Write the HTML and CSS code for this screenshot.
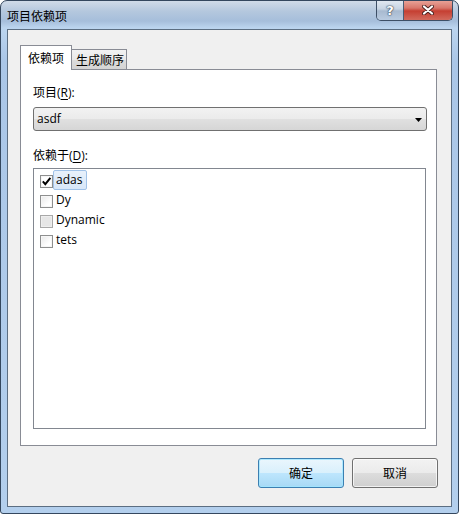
FILE: index.html
```html
<!DOCTYPE html>
<html lang="zh-CN">
<head>
<meta charset="utf-8">
<title>项目依赖项</title>
<link rel="stylesheet" href="styles.css">
</head>
<body>
<div class="window">
  <div class="titlebar">
    <span class="title">项目依赖项</span>
    <div class="caption">
      <div class="cap help">?</div>
      <div class="cap close">
        <svg width="12" height="10" viewBox="0 0 12 10">
          <path d="M2 1.5 L10 8.5 M10 1.5 L2 8.5" stroke="#4a2220" stroke-width="4" stroke-linecap="round" fill="none"/>
          <path d="M2 1.5 L10 8.5 M10 1.5 L2 8.5" stroke="#ffffff" stroke-width="2.2" stroke-linecap="round" fill="none"/>
        </svg>
      </div>
    </div>
  </div>
  <div class="client">
    <div class="tabs">
      <div class="tab active">依赖项</div>
      <div class="tab inactive">生成顺序</div>
    </div>
    <div class="panel">
      <div class="label">项目(<u>R</u>):</div>
      <div class="combo">
        <span class="combo-text">asdf</span>
        <svg class="arrow" width="7" height="4" viewBox="0 0 7 4"><polygon points="0,0 7,0 3.5,4" fill="#000"/></svg>
      </div>
      <div class="label label2">依赖于(<u>D</u>):</div>
      <div class="list">
        <div class="item">
          <span class="cb checked">
            <svg width="11" height="11" viewBox="0 0 11 11"><path d="M1.8 5.4 L4.3 8.2 L9.4 1.8" stroke="#000" stroke-width="2" fill="none"/></svg>
          </span>
          <span class="txt focus">adas</span>
        </div>
        <div class="item">
          <span class="cb"></span>
          <span class="txt">Dy</span>
        </div>
        <div class="item">
          <span class="cb disabled"></span>
          <span class="txt">Dynamic</span>
        </div>
        <div class="item">
          <span class="cb"></span>
          <span class="txt">tets</span>
        </div>
      </div>
    </div>
    <div class="buttons">
      <div class="btn default">确定</div>
      <div class="btn">取消</div>
    </div>
  </div>
</div>
</body>
</html>
```
FILE: styles.css
```css
* { box-sizing: border-box; }

body {
  margin: 0;
  background: #ffffff;
  font-family: "Open Sans", "Noto Sans CJK SC", sans-serif;
  font-size: 12px;
  color: #000;
}

.window {
  width: 459px;
  height: 514px;
  border: 1px solid #34475e;
  border-radius: 7px 7px 3px 3px;
  background: linear-gradient(to bottom, #d0dbe8 0px, #b5c8de 10px, #a6bedb 20px, #bcd5ef 27px, #aac6e7 60px, #b3cfed 100%);
  display: flex;
  flex-direction: column;
  overflow: hidden;
}

.titlebar {
  height: 28px;
  display: flex;
  align-items: flex-start;
  padding-left: 6px;
  flex: none;
}

.title {
  margin-top: 7px;
  line-height: 15px;
  font-family: "Noto Sans CJK SC", sans-serif;
}

.caption {
  margin-left: auto;
  margin-right: 5px;
  margin-top: -1px;
  height: 21px;
  display: flex;
  border: 1px solid #3d4f66;
  border-top: 0;
  border-radius: 0 0 5px 5px;
  overflow: hidden;
}

.cap {
  height: 20px;
  display: flex;
  align-items: center;
  justify-content: center;
}

.help {
  width: 27px;
  border-right: 1px solid #4a5c74;
  background: linear-gradient(to bottom, #e3eaf2 0%, #c7d4e3 45%, #a8bad0 55%, #b9cbe0 100%);
  color: #ffffff;
  font-family: "DejaVu Sans", sans-serif;
  font-weight: bold;
  font-size: 13px;
  text-shadow: 0 0 1px #3c4a5c, 0 0 1px #3c4a5c, 0 0 2px #3c4a5c;
}

.close {
  width: 48px;
  background: linear-gradient(to bottom, #eaa79c 0%, #d8776b 40%, #c53f32 55%, #d26a5d 100%);
}

.client {
  flex: 1;
  margin: 0 6px 6px 6px;
  background: #f0f0f0;
  border: 1px solid #5c6e82;
  padding: 15px 13px 18px 12px;
  display: flex;
  flex-direction: column;
}

.tabs {
  height: 24px;
  display: flex;
  align-items: flex-end;
  flex: none;
}

.tab {
  border: 1px solid #898c95;
  border-bottom: 0;
  font-family: "Noto Sans CJK SC", sans-serif;
}

.tab.active {
  width: 52px;
  height: 25px;
  margin-bottom: -1px;
  background: #ffffff;
  position: relative;
  z-index: 1;
  text-align: center;
  padding-top: 4px;
  line-height: 16px;
}

.tab.inactive {
  width: 55px;
  height: 20px;
  border-left: 0;
  background: linear-gradient(to bottom, #f2f2f2 0%, #e9e9e9 50%, #dddddd 51%, #d4d4d4 100%);
  padding-left: 4px;
  line-height: 19px;
}

.panel {
  flex: 1;
  background: #ffffff;
  border: 1px solid #898c95;
  margin-right: 1px;
  padding: 15px 9px 16px 12px;
  display: flex;
  flex-direction: column;
  min-height: 0;
}

.label {
  line-height: 15px;
  height: 15px;
  flex: none;
}

.label u {
  text-decoration-thickness: 1px;
  text-underline-offset: 2px;
}

.label2 {
  margin-top: 17px;
}

.combo {
  margin-top: 7px;
  height: 24px;
  flex: none;
  border: 1px solid #707070;
  border-radius: 3px;
  background: linear-gradient(to bottom, #f2f2f2 0%, #ebebeb 50%, #e0e0e0 51%, #d6d6d6 100%);
  display: flex;
  align-items: center;
  padding-left: 3px;
}

.combo-text {
  line-height: 16px;
}

.arrow {
  margin-left: auto;
  margin-right: 4px;
  margin-top: 1px;
}

.list {
  margin-top: 5px;
  margin-right: 1px;
  flex: 1;
  border: 1px solid #828790;
  background: #ffffff;
  padding: 1px 0 0 6px;
}

.item {
  height: 20px;
  display: flex;
  align-items: center;
}

.cb {
  width: 13px;
  height: 13px;
  border: 1px solid #8e8f8f;
  background: linear-gradient(135deg, #e9e9e9 0%, #ffffff 70%);
  box-shadow: inset 0 0 0 1px #f6f6f6;
  display: flex;
  align-items: center;
  justify-content: center;
  flex: none;
  margin-top: 2px;
}

.cb.checked {
  background: #ffffff;
}

.cb.disabled {
  border-color: #a8a8a8;
  background: #e6e6e6;
  box-shadow: inset 0 0 0 1px #eeeeee;
}

.txt {
  height: 20px;
  line-height: 18px;
  border: 1px solid transparent;
  border-radius: 2px;
  padding: 0 4px 0 2px;
}

.txt.focus {
  border-color: #a0c2e8;
  background: linear-gradient(to bottom, #e8f1fb 0%, #d8e7f8 100%);
}

.buttons {
  margin-top: 12px;
  display: flex;
  justify-content: flex-end;
  gap: 8px;
  flex: none;
}

.btn {
  width: 86px;
  height: 30px;
  border: 1px solid #707070;
  border-radius: 3px;
  background: linear-gradient(to bottom, #f2f2f2 0%, #ebebeb 49%, #dddddd 50%, #cfcfcf 100%);
  box-shadow: inset 0 0 0 1px rgba(255, 255, 255, 0.7);
  display: flex;
  align-items: center;
  justify-content: center;
  font-family: "Noto Sans CJK SC", sans-serif;
  line-height: 16px;
}

.btn.default {
  border-color: #3c7fb1;
  background: linear-gradient(to bottom, #eaf6fd 0%, #d9f0fc 49%, #bee6fd 50%, #a7d9f5 100%);
  box-shadow: inset 0 0 0 1px rgba(160, 230, 255, 0.8);
}
```
